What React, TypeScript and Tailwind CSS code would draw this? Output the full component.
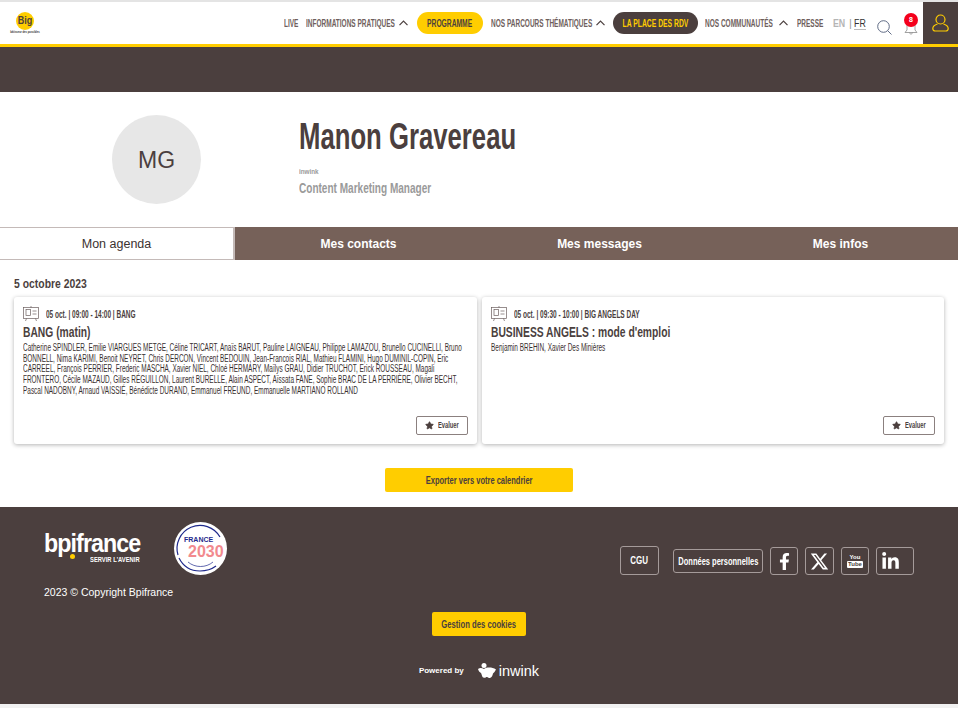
import type { ReactNode } from 'react'
import { Star } from 'lucide-react'
import { FaFacebookF, FaLinkedinIn } from 'react-icons/fa'

// The site's condensed webfont isn't available, so text is squeezed horizontally
const sq65 = 'inline-block origin-left scale-x-[0.65] whitespace-nowrap'

function Chevron() {
  return (
    <svg width="9" height="6" viewBox="0 0 9 6" fill="none" stroke="#4b3f3e" strokeWidth="1.2" className="ml-[4px]">
      <path d="M0.5 5.2 4.500 1.200l4 4" />
    </svg>
  )
}

function BoardIcon() {
  return (
    <svg width="16" height="16" viewBox="0 0 16 16" fill="none" stroke="#6b5f5e" strokeWidth="0.7">
      <rect x="0.500" y="1.500" width="15" height="11" />
      <rect x="3" y="3.500" width="4.500" height="6" />
      <path d="M9.500 5h4M9.500 8h4M8 0v1.500M3.500 12.500 2.500 15M12.500 12.500l1 2.500" />
    </svg>
  )
}

function Session({ time, title, speakers }: { time: string; title: string; speakers: string }) {
  return (
    <div className="relative h-[147px] rounded-[3px] bg-white px-[9px] pt-[9px] shadow-[0_1px_4px_rgba(0,0,0,0.3)]">
      <div className="flex h-[16px] items-center gap-[7px]">
        <BoardIcon />
        <span className="inline-block origin-left scale-x-[0.65] text-[10px] font-bold whitespace-nowrap text-[#4b3f3e]">{time}</span>
      </div>
      <h3 className="mt-[1px] origin-left scale-x-[0.735] text-[14px] leading-[18px] font-bold whitespace-nowrap text-[#4b3f3e]">{title}</h3>
      <p className="mt-[2px] w-[690px] origin-left scale-x-[0.645] text-[10px] leading-[10.7px] text-[#3a3130]">{speakers}</p>
      <button className="absolute right-[9px] bottom-[9px] flex h-[19px] w-[52px] items-center rounded-[2px] border border-[#8b807f] bg-white pl-[8px] text-[9px] font-bold text-[#4b3f3e]">
        <Star size={9} fill="#4b3f3e" stroke="#4b3f3e" className="shrink-0" />
        <span className="ml-[4px] inline-block shrink-0 origin-left scale-x-[0.64]">Evaluer</span>
      </button>
    </div>
  )
}

function SocialBox({ className, children }: { className: string; children: ReactNode }) {
  return (
    <div className={`flex items-center justify-center rounded-[3px] border border-[#a59b9a] text-white ${className}`}>
      {children}
    </div>
  )
}

export default function App() {
  return (
    <div className="h-[708px] w-[958px] overflow-hidden bg-white font-['Liberation_Sans',sans-serif] text-[#4b3f3e]">
      <header className="h-[47px] border-t-2 border-b-[3px] border-t-[#e4e4e4] border-b-[#ffcd00]">
        <div className="flex h-[42px] items-center">
          <div className="ml-[10px] flex w-[30px] flex-col items-center">
            <div className="flex h-[18px] w-[18px] items-center justify-center rounded-full bg-[#ffcd00] text-[10px] font-bold text-[#4b3f3e]">
              <span className="inline-block scale-x-[0.9]">Big</span>
            </div>
            <span className="mt-[1px] text-[2.600px] leading-[4px] font-bold whitespace-nowrap text-[#333]">bâtisseur des possibles</span>
          </div>
          <nav className="ml-auto flex items-center text-[10px] font-bold text-[#6f5f5d]">
            <span className="w-[14px]"><span className={sq65}>LIVE</span></span>
            <span className="ml-[8px] w-[89px]"><span className={sq65}>INFORMATIONS PRATIQUES</span></span>
            <Chevron />
            <span className="ml-[9px] flex h-[22px] w-[66px] items-center justify-center rounded-full bg-[#ffcd00] text-[#4b3f3e]">
              <span className="inline-block scale-x-[0.67] whitespace-nowrap">PROGRAMME</span>
            </span>
            <span className="ml-[8px] w-[101px]"><span className={sq65}>NOS PARCOURS THÉMATIQUES</span></span>
            <Chevron />
            <span className="ml-[8px] flex h-[22px] w-[85px] items-center justify-center rounded-full bg-[#4b3f3e] text-[#ffcd00]">
              <span className="inline-block scale-x-[0.68] whitespace-nowrap">LA PLACE DES RDV</span>
            </span>
            <span className="ml-[7px] w-[70px]"><span className={sq65}>NOS COMMUNAUTÉS</span></span>
            <Chevron />
            <span className="ml-[9px] w-[26px]"><span className={sq65}>PRESSE</span></span>
            <span className="ml-[10px] w-[12px] text-[11px] text-[#b5b5b5]"><span className="inline-block origin-left scale-x-[0.8]">EN</span></span>
            <span className="ml-[4px] w-[1px] text-[11px] font-normal text-[#999]">|</span>
            <span className="ml-[4px] w-[12px] border-b border-[#bbb] text-[11px] leading-[12px] font-normal text-[#333]"><span className="inline-block origin-left scale-x-[0.8]">FR</span></span>
            <svg width="15" height="15" viewBox="0 0 15 15" fill="none" stroke="#4f5b78" strokeWidth="0.9" className="mt-[9px] ml-[11px]">
              <circle cx="6.500" cy="6.500" r="5.800" />
              <path d="m10.800 10.800 3.700 3.700" />
            </svg>
            <div className="relative mt-[6px] ml-[12px] h-[20px] w-[13px]">
              <svg width="14" height="14" viewBox="0 0 14 14" fill="none" stroke="#8a8a8a" strokeWidth="0.8" className="absolute top-[6px] left-0">
                <path d="M3 3v5L1 10.500h12L11 8V3M5.500 10.500c0 2 3 2 3 0" />
              </svg>
              <span className="absolute top-[-3px] left-0 flex h-[14px] w-[14px] items-center justify-center rounded-full bg-[#f4001c] text-[7px] text-white">
                8
              </span>
            </div>
          </nav>
          <div className="ml-[6px] flex h-[42px] w-[35px] items-center justify-center bg-[#4b3f3e]">
            <svg width="17" height="19" viewBox="0 0 17 19" fill="none" stroke="#ffcd00" strokeWidth="1.200">
              <circle cx="8.500" cy="5.500" r="4.500" />
              <path d="M5.500 10C2.500 11 .8 12.500 .8 14.500c0 1.500 1 2.500 2.500 2.500h10.400c1.500 0 2.500-1 2.500-2.500 0-2-1.700-3.500-4.700-4.500" />
            </svg>
          </div>
        </div>
      </header>

      <div className="h-[45px] bg-[#4b3f3e]" />

      <section className="flex h-[135px]">
        <div className="mt-[23px] ml-[112px] flex h-[89px] w-[89px] items-center justify-center rounded-full bg-[#e7e7e7] pt-[1px] text-[23px] text-[#4b3f3e]">
          MG
        </div>
        <div className="ml-[98px]">
          <h1 className="mt-[24px] origin-left scale-x-[0.714] text-[36px] leading-[42px] font-bold whitespace-nowrap text-[#4b3f3e]">Manon Gravereau</h1>
          <p className="mt-[9px] origin-left scale-x-[0.9] text-[7px] leading-[9px] font-bold text-[#9a9a9a]">inwink</p>
          <p className="mt-[4px] origin-left scale-x-[0.717] text-[14px] leading-[16px] font-bold whitespace-nowrap text-[#9a9a9a]">Content Marketing Manager</p>
        </div>
      </section>

      <nav className="grid h-[33px] grid-cols-[235px_1fr_1fr_1fr] bg-[#766159] text-[12px] font-bold text-white">
        <div className="flex items-center justify-center border-y border-r-2 border-[#c4bab8] bg-white pt-[1px] text-[12.500px] font-normal text-[#3c3231]">Mon agenda</div>
        <div className="flex items-center justify-center pt-[1px] pl-[6px]">Mes contacts</div>
        <div className="flex items-center justify-center pt-[1px] pl-[6px]">Mes messages</div>
        <div className="flex items-center justify-center pt-[1px] pl-[6px]">Mes infos</div>
      </nav>

      <main className="px-[14px]">
        <h2 className="mt-[16px] origin-left scale-x-[0.8] text-[13px] leading-[15px] font-bold whitespace-nowrap text-[#4b3f3e]">5 octobre 2023</h2>
        <div className="mt-[6px] grid grid-cols-2 gap-[5px]">
          <Session
            time="05 oct. | 09:00 - 14:00 | BANG"
            title="BANG (matin)"
            speakers="Catherine SPINDLER, Emilie VIARGUES METGE, Céline TRICART, Anaïs BARUT, Pauline LAIGNEAU, Philippe LAMAZOU, Brunello CUCINELLI, Bruno BONNELL, Nima KARIMI, Benoit NEYRET, Chris DERCON, Vincent BEDOUIN, Jean-Francois RIAL, Mathieu FLAMINI, Hugo DUMINIL-COPIN, Eric CARREEL, François PERRIER, Frederic MASCHA, Xavier NIEL, Chloé HERMARY, Maïlys GRAU, Didier TRUCHOT, Erick ROUSSEAU, Magali FRONTERO, Cécile MAZAUD, Gilles RÉGUILLON, Laurent BURELLE, Alain ASPECT, Aïssata FANE, Sophie BRAC DE LA PERRIÈRE, Olivier BECHT, Pascal NADOBNY, Arnaud VAISSIÉ, Bénédicte DURAND, Emmanuel FREUND, Emmanuelle MARTIANO ROLLAND"
          />
          <Session
            time="05 oct. | 09:30 - 10:00 | BIG ANGELS DAY"
            title="BUSINESS ANGELS : mode d'emploi"
            speakers="Benjamin BREHIN, Xavier Des Minières"
          />
        </div>
        <div className="mt-[24px] flex justify-center">
          <button className="flex h-[24px] w-[188px] items-center justify-center rounded-[2px] bg-[#ffcd00] text-[10px] font-bold text-[#4b3f3e]">
            <span className="inline-block scale-x-[0.75] whitespace-nowrap">Exporter vers votre calendrier</span>
          </button>
        </div>
      </main>

      <footer className="mt-[15px] h-[197px] bg-[#4b3f3e] text-white">
        <div className="flex h-[68px]">
          <div className="relative ml-[44px] flex w-[96px] flex-col pt-[24px]">
            <span className="origin-left scale-x-[0.93] text-[25px] leading-[24px] font-bold tracking-[-1px] whitespace-nowrap">bpifrance</span>
            <span className="ml-[46px] origin-left scale-x-[0.83] text-[7px] leading-[10px] font-bold whitespace-nowrap">SERVIR L'AVENIR</span>
            <span className="absolute top-[47px] left-[26px] h-[5px] w-[5px] rounded-full bg-[#ffcd00]" />
          </div>
          <div className="relative mt-[15px] ml-[34px] flex h-[53px] w-[53px] flex-col items-start justify-center rounded-full bg-white pb-[3px]">
            <svg width="53" height="53" viewBox="0 0 53 53" fill="none" stroke="#1f2a8c" className="absolute inset-0">
              <path d="M4 33A23 23 0 0 1 46 15" strokeWidth="1.200" />
              <path d="M5 36C10 46 18 49 26 49c7 0 12-2 16-5" strokeWidth="1.200" />
              <path d="M14 40c7 6 18 6 25 0" strokeWidth="0.700" />
            </svg>
            <span className="relative ml-[10px] text-[7px] leading-[10px] font-bold text-[#1f2a8c]">FRANCE</span>
            <span className="relative ml-[14px] text-[16px] leading-[14px] font-bold text-[#f28a8e]">2030</span>
          </div>
          <div className="mt-[39px] mr-[44px] ml-auto flex items-start text-[10px] font-bold">
            <SocialBox className="h-[29px] w-[39px]">
              <span className="inline-block scale-x-[0.8]">CGU</span>
            </SocialBox>
            <SocialBox className="mt-[3px] ml-[14px] h-[24px] w-[90px]">
              <span className="inline-block scale-x-[0.75] whitespace-nowrap">Données personnelles</span>
            </SocialBox>
            <SocialBox className="mt-[1px] ml-[7px] h-[28px] w-[28px]">
              <FaFacebookF size={17} />
            </SocialBox>
            <SocialBox className="mt-[1px] ml-[7px] h-[28px] w-[29px]">
              <svg width="19" height="19" viewBox="0 0 24 24" fill="white">
                <path d="M18.200 2h3.400l-7.400 8.500L23 22h-6.800l-5.300-7-6.100 7H1.300l7.900-9L1 2h7l4.800 6.400zm-1.200 18h1.900L7 3.900H5z" />
              </svg>
            </SocialBox>
            <SocialBox className="mt-[1px] ml-[7px] h-[28px] w-[28px]">
              <div className="flex flex-col items-center text-[6px] leading-[7px]">
                <span>You</span>
                <span className="rounded-[1px] bg-white px-[1px] text-[#4b3f3e]">Tube</span>
              </div>
            </SocialBox>
            <SocialBox className="mt-[1px] ml-[7px] h-[28px] w-[38px] !justify-start pl-[4px]">
              <FaLinkedinIn size={19} />
            </SocialBox>
          </div>
        </div>
        <p className="mt-[11px] ml-[44px] text-[10.500px] leading-[13px]">2023 © Copyright Bpifrance</p>
        <div className="mt-[13px] flex justify-center">
          <button className="flex h-[24px] w-[94px] items-center justify-center rounded-[2px] bg-[#ffcd00] text-[10px] font-bold text-[#4b3f3e]">
            <span className="inline-block scale-x-[0.77] whitespace-nowrap">Gestion des cookies</span>
          </button>
        </div>
        <div className="mt-[27px] flex items-center justify-center">
          <span className="text-[8px] font-bold">Powered by</span>
          <svg width="18" height="16" viewBox="0 0 18 16" fill="white" className="ml-[14px]">
            <circle cx="6" cy="2.500" r="2.500" />
            <path d="M0 6c2-1.500 4-1 6 0 3-2 8-2 12 .5-1 2-2 3-3 4-.5 2-1 4-3 4.500-1.500.3-2-1-3-1s-2 1-3 .7C4 14.500 4 12 3 10 1.500 9 .5 8 0 6z" />
          </svg>
          <span className="ml-[3px] text-[14.500px] leading-[16px]">inwink</span>
        </div>
      </footer>
      <div className="h-[4px] bg-[#f1f1f1]" />
    </div>
  )
}
